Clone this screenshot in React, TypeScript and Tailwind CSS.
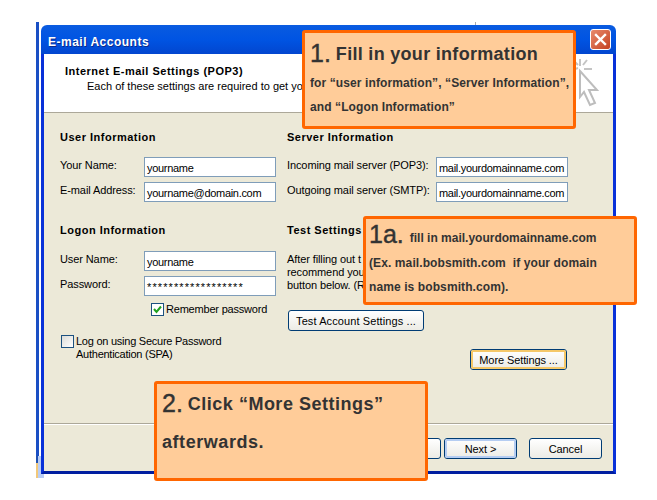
import React from 'react';

const uiFont = "font-['Liberation_Sans',sans-serif] text-[11px] tracking-[-0.1px] leading-[14px] text-black";
const heading = 'font-bold tracking-[0.5px]';

const Field = ({ value, className = 'tracking-[-0.3px]' }: { value: string; className?: string }) => (
  <div className={`h-5 w-[132px] shrink-0 border border-[#7f9db9] bg-white pl-[2px] leading-[21px] whitespace-nowrap overflow-hidden ${className}`}>
    {value}
  </div>
);

const Row = ({ label, value, labelWidth, fieldClass }: { label: string; value: string; labelWidth: string; fieldClass?: string }) => (
  <div className="flex">
    <div className={`whitespace-nowrap pt-px ${labelWidth}`}>{label}</div>
    <Field value={value} className={fieldClass} />
  </div>
);

const XpButton = ({ label, className, inner = 'leading-[20px]' }: { label?: string; className: string; inner?: string }) => (
  <div className={`h-[21px] shrink-0 rounded-[3px] border border-[#003c74] bg-gradient-to-b from-white to-[#ecebe5] text-center ${className}`}>
    <div className={`h-full rounded-[2px] ${inner}`}>{label}</div>
  </div>
);

const Callout = ({ className, children }: { className: string; children: React.ReactNode }) => (
  <div className={`absolute w-[274px] rounded-[3px] border-[3px] border-[#ff6600] bg-[#ffcc99] font-['Liberation_Sans',sans-serif] font-bold text-[#333333] ${className}`}>
    {children}
  </div>
);

const App: React.FC = () => {
  return (
    <div className="relative h-[500px] w-[657px] overflow-hidden bg-white pl-[41px] pt-[25px]">
      {/* bits of the desktop behind the window */}
      <div className="absolute left-[36px] top-[22px] h-[434px] w-[3px] bg-[#1a4fc4]" />
      <div className="absolute left-[36px] top-[456px] h-[22px] w-[8px] bg-[#b9cdf5]">
        <div className="h-[7px] w-[2px] bg-[#1f50b0]" />
        <div className="h-[15px] w-[2px] bg-[#f2c879]" />
      </div>
      <div className="absolute left-[475px] top-[22px] h-[3px] w-px bg-[#aaaaaa]" />

      <div className={`relative flex h-[449px] w-[575px] flex-col ${uiFont}`}>
        <div className="flex h-[29px] shrink-0 items-center justify-between rounded-t-[6px] bg-gradient-to-b from-[#0a5be0] via-[#0054e3] to-[#0246cf] pl-[7px] pr-[5px]">
          <span className="pt-[4px] text-[12px] font-bold tracking-[0.5px] text-white [text-shadow:1px_1px_0_#0a2a8c]">E-mail Accounts</span>
          <div className="flex h-[21px] w-[21px] items-center justify-center rounded-[3px] border border-white bg-gradient-to-br from-[#e88a6c] to-[#c4401f]">
            <svg width="13" height="13" viewBox="0 0 13 13">
              <path d="M2 2 L11 11 M11 2 L2 11" stroke="white" strokeWidth="2.4" strokeLinecap="square" />
            </svg>
          </div>
        </div>

        <div className="flex min-h-0 flex-1 flex-col border-x-[3px] border-b-[3px] border-x-[#0831d9] border-b-[#001ea0] bg-[#ece9d8]">
          <div className="relative h-[59px] shrink-0 border-b border-[#aca899] bg-white pl-[21px] pt-[10px]">
            <div className={heading}>Internet E-mail Settings (POP3)</div>
            <div className="pl-[22px] pt-px whitespace-nowrap tracking-normal">Each of these settings are required to get yo</div>
            <svg className="absolute left-[531px] top-[3px]" width="24" height="50" viewBox="0 0 24 50" fill="none">
              <path d="M5 14 L22 33 L14 33 L20 46 L15 48 L9 35 L5 40 Z" fill="#ffffff" stroke="#bdbdbd" strokeWidth="2" />
              <path d="M5 2 V9 M0 5 L3 8 M12 3 L8 8 M9 12 H17 M0 12 L3 11" stroke="#c4c4c4" strokeWidth="2" />
            </svg>
          </div>

          <div className="grid h-[310px] shrink-0 grid-cols-[227px_1fr] pl-[16px] pt-[17px]">
            <div className="flex flex-col">
              <div className={heading}>User Information</div>
              <div className="mt-[13px] flex flex-col gap-[5px]">
                <Row label="Your Name:" value="yourname" labelWidth="w-[84px]" />
                <Row label="E-mail Address:" value="yourname@domain.com" labelWidth="w-[84px]" />
              </div>
              <div className={`mt-[21px] ${heading}`}>Logon Information</div>
              <div className="mt-[14px] flex flex-col gap-[5px]">
                <Row label="User Name:" value="yourname" labelWidth="w-[84px]" />
                <Row label="Password:" value="******************" labelWidth="w-[84px]" fieldClass="tracking-[1.1px]" />
              </div>
              <div className="ml-[91px] mt-[6px] flex items-center gap-[2px]">
                <div className="flex h-[13px] w-[13px] items-center justify-center border border-[#1c5180] bg-white">
                  <svg width="9" height="9" viewBox="0 0 9 9">
                    <path d="M1 4 L3.5 7 L8 1.5" fill="none" stroke="#21a121" strokeWidth="2" />
                  </svg>
                </div>
                <span className="tracking-[-0.2px]">Remember password</span>
              </div>
              <div className="ml-px mt-[19px] flex gap-[2px]">
                <div className="h-[13px] w-[13px] shrink-0 border border-[#1c5180] bg-gradient-to-br from-[#dcdcd7] to-white" />
                <span className="leading-[13px] tracking-[-0.25px]">Log on using Secure Password<br />Authentication (SPA)</span>
              </div>
            </div>

            <div className="flex flex-col">
              <div className={heading}>Server Information</div>
              <div className="mt-[13px] flex flex-col gap-[5px]">
                <Row label="Incoming mail server (POP3):" value="mail.yourdomainname.com" labelWidth="w-[149px]" />
                <Row label="Outgoing mail server (SMTP):" value="mail.yourdomainname.com" labelWidth="w-[149px]" />
              </div>
              <div className={`mt-[21px] ${heading}`}>Test Settings</div>
              <div className="mt-[16px] leading-[13px]">
                After filling out t
                <br />
                recommend you
                <br />
                button below. (R
              </div>
              <XpButton label="Test Account Settings ..." className="ml-px mt-[18px] w-[136px] tracking-[0.1px]" />
              <XpButton
                label="More Settings ..."
                className="ml-[183px] mt-[18px] w-[97px]"
                inner="border-2 border-[#f5c869] leading-[16px]"
              />
            </div>
          </div>

          <div className="flex flex-1 items-start justify-end border-t border-[#aca899] pr-[11px] pt-[14px] shadow-[inset_0_1px_0_#ffffff]">
            <XpButton className="w-[73px]" />
            <XpButton label="Next >" className="ml-[3px] w-[73px]" inner="border-2 border-[#b5cdf2] leading-[16px]" />
            <XpButton label="Cancel" className="ml-[12px] w-[73px]" />
          </div>
        </div>
      </div>

      <Callout className="left-[302px] top-[30px] h-[99px] pl-[5px]">
        <div className="flex h-[38px] items-center gap-[5px] pt-[4px] text-[18px] tracking-[0.3px]">
          <span className="text-[25px] font-normal tracking-normal [-webkit-text-stroke:0.4px_#333333]">1.</span>
          <span>Fill in your information</span>
        </div>
        <div className="whitespace-nowrap text-[12px] leading-[24px] tracking-[0.1px]">
          for “user information”, “Server Information”,
          <br />
          and “Logon Information”
        </div>
      </Callout>

      <Callout className="left-[363px] top-[216px] h-[89px] pl-[3px]">
        <div className="flex h-[32px] items-center gap-[6px] text-[12px]">
          <span className="text-[25px] font-normal [-webkit-text-stroke:0.4px_#333333]">1a.</span>
          <span className="pt-[6px]">fill in mail.yourdomainname.com</span>
        </div>
        <div className="whitespace-nowrap text-[12px] leading-[24px] tracking-[0.1px]">
          (Ex. mail.bobsmith.com&nbsp; if your domain
          <br />
          name is bobsmith.com).
        </div>
      </Callout>

      <Callout className="left-[154px] top-[381px] h-[100px] pl-[5px]">
        <div className="flex h-[40px] items-center gap-[5px] text-[16px] tracking-[0.5px]">
          <span className="text-[25px] font-normal tracking-normal [-webkit-text-stroke:0.4px_#333333]">2.</span>
          <span className="text-[18px]">Click “More Settings”</span>
        </div>
        <div className="text-[18px] leading-[36px] tracking-[0.55px]">afterwards.</div>
      </Callout>
    </div>
  );
};

export default App;
